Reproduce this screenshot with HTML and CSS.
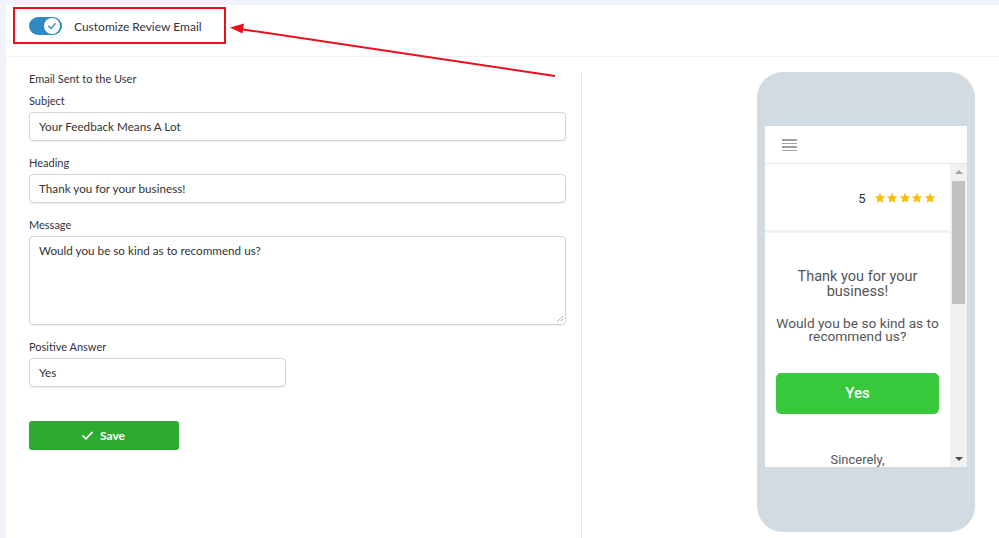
FILE: index.html
```html
<!DOCTYPE html>
<html>
<head>
<meta charset="utf-8">
<link rel="stylesheet" href="styles.css">
</head>
<body>
<div class="page">
  <div class="topstrip"></div>
  <div class="main">
    <div class="gutter"></div>
    <div class="content">
      <header class="head">
        <div class="highlight">
          <span class="toggle"><span class="knob"><svg viewBox="0 0 16 16" width="16" height="16"><path d="M4.8 8.3 L7 10.4 L11.2 5.8" fill="none" stroke="#2f8ac4" stroke-width="1.4" stroke-linecap="round" stroke-linejoin="round"/></svg></span></span>
          <span class="toggle-label">Customize Review Email</span>
        </div>
      </header>
      <div class="body">
        <form class="form">
          <div class="section-title">Email Sent to the User</div>
          <label class="lbl">Subject</label>
          <div class="input wide">Your Feedback Means A Lot</div>
          <label class="lbl">Heading</label>
          <div class="input wide">Thank you for your business!</div>
          <label class="lbl">Message</label>
          <div class="input wide area">Would you be so kind as to recommend us?
            <svg class="grip" viewBox="0 0 10 10" width="10" height="10"><path d="M9 3 L3 9 M9 6 L6 9" stroke="#777" stroke-width="1" stroke-dasharray="1 1" fill="none"/></svg>
          </div>
          <label class="lbl">Positive Answer</label>
          <div class="input short">Yes</div>
          <button type="button" class="save"><svg viewBox="0 0 14 14" width="13" height="13"><path d="M2 7.5 L5.3 10.6 L12 3.6" fill="none" stroke="#fff" stroke-width="1.8" stroke-linecap="round" stroke-linejoin="round"/></svg><span>Save</span></button>
        </form>
        <div class="preview">
          <div class="phone">
            <div class="screen">
              <div class="screen-head">
                <span class="burger"><i></i><i></i><i></i><i></i></span>
              </div>
              <div class="screen-body">
                <div class="mail">
                  <div class="rating">
                    <span class="score">5</span>
                    <span class="stars">
                      <svg viewBox="0 0 24 24" width="12" height="12"><path d="M12 1.5l3.1 6.9 7.4.7-5.6 5 1.6 7.4L12 17.6l-6.5 3.9 1.6-7.4-5.6-5 7.4-.7z" fill="#fbbc05"/></svg>
                      <svg viewBox="0 0 24 24" width="12" height="12"><path d="M12 1.5l3.1 6.9 7.4.7-5.6 5 1.6 7.4L12 17.6l-6.5 3.9 1.6-7.4-5.6-5 7.4-.7z" fill="#fbbc05"/></svg>
                      <svg viewBox="0 0 24 24" width="12" height="12"><path d="M12 1.5l3.1 6.9 7.4.7-5.6 5 1.6 7.4L12 17.6l-6.5 3.9 1.6-7.4-5.6-5 7.4-.7z" fill="#fbbc05"/></svg>
                      <svg viewBox="0 0 24 24" width="12" height="12"><path d="M12 1.5l3.1 6.9 7.4.7-5.6 5 1.6 7.4L12 17.6l-6.5 3.9 1.6-7.4-5.6-5 7.4-.7z" fill="#fbbc05"/></svg>
                      <svg viewBox="0 0 24 24" width="12" height="12"><path d="M12 1.5l3.1 6.9 7.4.7-5.6 5 1.6 7.4L12 17.6l-6.5 3.9 1.6-7.4-5.6-5 7.4-.7z" fill="#fbbc05"/></svg>
                    </span>
                  </div>
                  <div class="mail-text">
                    <p class="m-heading">Thank you for your business!</p>
                    <p class="m-msg">Would you be so kind as to recommend us?</p>
                    <div class="yes">Yes</div>
                    <p class="sign">Sincerely,</p>
                  </div>
                </div>
                <div class="scrollbar">
                  <span class="arrow up"></span>
                  <span class="thumb"></span>
                  <span class="arrow down"></span>
                </div>
              </div>
            </div>
          </div>
        </div>
      </div>
    </div>
  </div>
  <svg class="annot" width="999" height="538" viewBox="0 0 999 538">
    <line x1="555" y1="76" x2="240" y2="29" stroke="#e8101a" stroke-width="2"/>
    <path d="M230 27.5 L244 23.5 L242.5 33.5 Z" fill="#e8101a"/>
  </svg>
</div>
</body>
</html>
```
FILE: styles.css
```css
* { box-sizing: border-box; }
html, body { margin: 0; padding: 0; background: #fff; }
body { font-family: Lato, "Noto Sans", sans-serif; font-size: 12px; color: #333; }
.page { position: relative; width: 999px; height: 538px; overflow: hidden; display: flex; flex-direction: column; }
.topstrip { height: 5px; background: #f0f4f8; flex: none; }
.main { flex: 1; display: flex; }
.gutter { width: 6px; background: #f0f4f8; flex: none; }
.content { flex: 1; display: flex; flex-direction: column; }
.head { height: 52px; border-bottom: 1px solid #eef1f4; padding: 2px 0 0 7px; flex: none; }
.highlight { width: 213px; height: 37px; border: 2px solid #e8101a; display: flex; align-items: center; padding: 1px 0 0 14px; }
.toggle { width: 33px; height: 18px; border-radius: 9px; background: #2f8ac4; position: relative; display: inline-block; flex: none; margin-top: -1px; }
.knob { position: absolute; right: 2px; top: 1px; width: 16px; height: 16px; border-radius: 50%; background: #fff; display: flex; }
.toggle-label { margin-left: 12px; color: #333340; font-size: 12px; }
.body { flex: 1; display: flex; padding-top: 15px; }
.form { width: 576px; border-right: 1px solid #e8e8ec; padding: 0 15px 0 23px; display: flex; flex-direction: column; align-items: flex-start; flex: none; }
.section-title { line-height: 14px; font-size: 11px; color: #333340; margin-bottom: 8px; }
.lbl { display: block; line-height: 14px; font-size: 11px; color: #333340; margin-bottom: 4px; }
.input { height: 29px; border: 1px solid #d4d4dc; border-radius: 4px; padding: 0 9px; line-height: 26px; color: #333; font-size: 11.7px; box-shadow: 0 1px 2px rgba(0,0,0,0.06); margin-bottom: 15px; background: #fff; }
.input.wide { width: 537px; }
.input.short { width: 257px; margin-bottom: 34px; }
.input.area { height: 89px; position: relative; line-height: 13px; padding-top: 7px; }
.grip { position: absolute; right: 1px; bottom: 1px; }
.save { width: 150px; height: 29px; border: none; border-radius: 3px; background: #2eaa2f; color: #fff; font-family: inherit; font-weight: bold; font-size: 12px; display: flex; align-items: center; justify-content: center; gap: 6px; padding: 0; padding-right: 2px; }
.preview { flex: 1; display: flex; justify-content: flex-end; padding-right: 24px; }
.phone { width: 218px; height: 460px; background: #d3dbe2; border-radius: 26px; padding: 54px 8px 0; }
.screen { height: 341px; background: #fff; display: flex; flex-direction: column; }
.screen-head { height: 38px; border-bottom: 1px solid #e3e7ec; padding: 13px 0 0 17px; flex: none; }
.burger { display: flex; flex-direction: column; gap: 2px; width: 15px; }
.burger i { display: block; height: 1.5px; background: #a0a0a0; }
.screen-body { flex: 1; display: flex; overflow: hidden; }
.mail { flex: 1; display: flex; flex-direction: column; }
.rating { height: 69px; border-bottom: 3px solid #f0f3f6; display: flex; align-items: center; justify-content: flex-end; padding: 2px 14px 0 0; font-family: Roboto, sans-serif; flex: none; }
.score { font-size: 13px; color: #333; margin-right: 8px; }
.stars { display: flex; gap: 0.6px; }
.mail-text { flex: 1; padding: 36px 11px 0; text-align: center; font-family: Roboto, sans-serif; color: #555; }
.m-heading { font-size: 14.5px; line-height: 15px; margin: 0 0 18px; padding: 0 20px; }
.m-msg { font-size: 13.7px; line-height: 13px; margin: 0 -11px 30px; }
.yes { height: 41px; border-radius: 5px; background: #37c83c; color: #fff; font-size: 15px; font-weight: 500; line-height: 41px; }
.sign { font-size: 13px; margin: 38px 0 0; }
.scrollbar { width: 17px; background: #f1f1f1; display: flex; flex-direction: column; align-items: center; flex: none; }
.arrow { width: 0; height: 0; border-left: 4px solid transparent; border-right: 4px solid transparent; }
.arrow.up { border-bottom: 4px solid #a3a3a3; margin-top: 6px; }
.arrow.down { border-top: 4px solid #505050; margin-top: auto; margin-bottom: 6px; }
.thumb { width: 13px; height: 123px; background: #c1c1c1; margin-top: 7px; }
.annot { position: absolute; left: 0; top: 0; pointer-events: none; }
```
